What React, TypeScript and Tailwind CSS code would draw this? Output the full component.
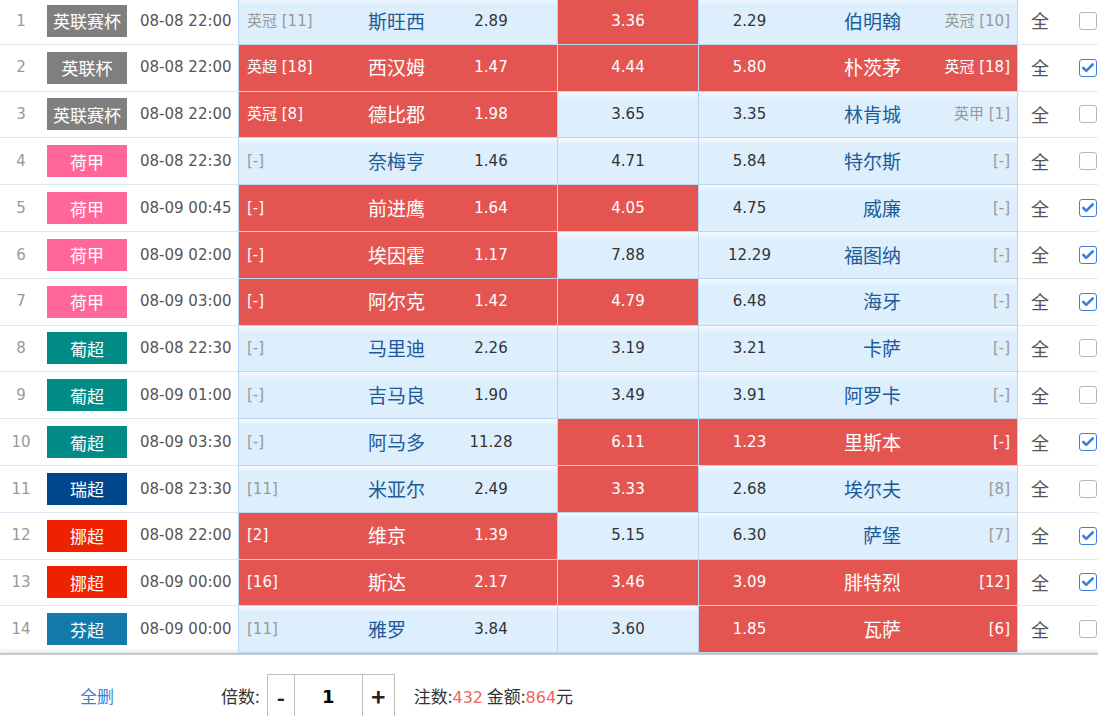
import { Check } from 'lucide-react';

type Match = {
  no: number;
  league: string;
  color: string;
  time: string;
  homeRank: string;
  home: string;
  win: string;
  draw: string;
  lose: string;
  away: string;
  awayRank: string;
  pick: [boolean, boolean, boolean];
  checked: boolean;
};

const GRAY = 'bg-[#7f7f7f]';
const PINK = 'bg-[#ff6699]';
const TEAL = 'bg-[#008b86]';
const NAVY = 'bg-[#00468a]';
const RED = 'bg-[#ee2200]';
const BLUE = 'bg-[#1479ab]';

const matches: Match[] = [
  { no: 1, league: '英联赛杯', color: GRAY, time: '08-08 22:00', homeRank: '英冠 [11]', home: '斯旺西', win: '2.89', draw: '3.36', lose: '2.29', away: '伯明翰', awayRank: '英冠 [10]', pick: [false, true, false], checked: false },
  { no: 2, league: '英联杯', color: GRAY, time: '08-08 22:00', homeRank: '英超 [18]', home: '西汉姆', win: '1.47', draw: '4.44', lose: '5.80', away: '朴茨茅', awayRank: '英冠 [18]', pick: [true, true, true], checked: true },
  { no: 3, league: '英联赛杯', color: GRAY, time: '08-08 22:00', homeRank: '英冠 [8]', home: '德比郡', win: '1.98', draw: '3.65', lose: '3.35', away: '林肯城', awayRank: '英甲 [1]', pick: [true, false, false], checked: false },
  { no: 4, league: '荷甲', color: PINK, time: '08-08 22:30', homeRank: '[-]', home: '奈梅亨', win: '1.46', draw: '4.71', lose: '5.84', away: '特尔斯', awayRank: '[-]', pick: [false, false, false], checked: false },
  { no: 5, league: '荷甲', color: PINK, time: '08-09 00:45', homeRank: '[-]', home: '前进鹰', win: '1.64', draw: '4.05', lose: '4.75', away: '威廉', awayRank: '[-]', pick: [true, true, false], checked: true },
  { no: 6, league: '荷甲', color: PINK, time: '08-09 02:00', homeRank: '[-]', home: '埃因霍', win: '1.17', draw: '7.88', lose: '12.29', away: '福图纳', awayRank: '[-]', pick: [true, false, false], checked: true },
  { no: 7, league: '荷甲', color: PINK, time: '08-09 03:00', homeRank: '[-]', home: '阿尔克', win: '1.42', draw: '4.79', lose: '6.48', away: '海牙', awayRank: '[-]', pick: [true, true, false], checked: true },
  { no: 8, league: '葡超', color: TEAL, time: '08-08 22:30', homeRank: '[-]', home: '马里迪', win: '2.26', draw: '3.19', lose: '3.21', away: '卡萨', awayRank: '[-]', pick: [false, false, false], checked: false },
  { no: 9, league: '葡超', color: TEAL, time: '08-09 01:00', homeRank: '[-]', home: '吉马良', win: '1.90', draw: '3.49', lose: '3.91', away: '阿罗卡', awayRank: '[-]', pick: [false, false, false], checked: false },
  { no: 10, league: '葡超', color: TEAL, time: '08-09 03:30', homeRank: '[-]', home: '阿马多', win: '11.28', draw: '6.11', lose: '1.23', away: '里斯本', awayRank: '[-]', pick: [false, true, true], checked: true },
  { no: 11, league: '瑞超', color: NAVY, time: '08-08 23:30', homeRank: '[11]', home: '米亚尔', win: '2.49', draw: '3.33', lose: '2.68', away: '埃尔夫', awayRank: '[8]', pick: [false, true, false], checked: false },
  { no: 12, league: '挪超', color: RED, time: '08-08 22:00', homeRank: '[2]', home: '维京', win: '1.39', draw: '5.15', lose: '6.30', away: '萨堡', awayRank: '[7]', pick: [true, false, false], checked: true },
  { no: 13, league: '挪超', color: RED, time: '08-09 00:00', homeRank: '[16]', home: '斯达', win: '2.17', draw: '3.46', lose: '3.09', away: '腓特烈', awayRank: '[12]', pick: [true, true, true], checked: true },
  { no: 14, league: '芬超', color: BLUE, time: '08-09 00:00', homeRank: '[11]', home: '雅罗', win: '3.84', draw: '3.60', lose: '1.85', away: '瓦萨', awayRank: '[6]', pick: [false, false, true], checked: false },
];

const numFont = "font-['DejaVu_Sans','Noto_Sans_CJK_SC',sans-serif]";
const cjkFont = "font-['Noto_Sans_CJK_SC',sans-serif]";

const cellOn = 'bg-[#e45552] text-white';
const cellOff = 'bg-[linear-gradient(#f5faff,#ddeefc_7px)]';

function Row({ m }: { m: Match }) {
  const [h, d, a] = m.pick;
  return (
    <div className="flex h-[46.8px] items-stretch">
      <div className={`w-[42px] flex items-center justify-center border-b border-[#dde9f6] text-[15px] text-[#999] ${numFont}`}>
        {m.no}
      </div>
      <div className="w-[92px] flex items-center pl-[5px] border-b border-[#dde9f6]">
        <span className={`${m.color} w-[80px] h-[32px] flex items-center justify-center text-white text-[17px] leading-none ${cjkFont}`}>
          {m.league}
        </span>
      </div>
      <div className={`w-[104px] flex items-center pl-[6px] border-b border-[#dde9f6] text-[15px] text-[#555] ${numFont}`}>
        {m.time}
      </div>

      {/* home block */}
      <div className={`w-[320px] flex items-center border-x border-b border-[#bcd6f2] ${h ? cellOn : cellOff}`}>
        <div className={`w-[129px] pl-[8px] text-[15px] ${h ? 'text-white' : 'text-[#999]'} ${numFont}`}>{m.homeRank}</div>
        <div className={`w-[98px] text-[19px] ${h ? 'text-white' : 'text-[#1c5a98]'} ${cjkFont}`}>{m.home}</div>
        <div className={`w-[50px] text-center text-[15px] ${h ? 'text-white' : 'text-[#333]'} ${numFont}`}>{m.win}</div>
      </div>

      {/* draw */}
      <div className={`w-[140px] flex items-center justify-center border-b border-[#bcd6f2] text-[15px] ${numFont} ${d ? cellOn : `${cellOff} text-[#333]`}`}>
        {m.draw}
      </div>

      {/* away block */}
      <div className={`w-[320px] flex items-center border-x border-b border-[#bcd6f2] ${a ? cellOn : cellOff}`}>
        <div className={`w-[101px] text-center text-[15px] ${a ? 'text-white' : 'text-[#333]'} ${numFont}`}>{m.lose}</div>
        <div className={`w-[101px] text-right text-[19px] ${a ? 'text-white' : 'text-[#1c5a98]'} ${cjkFont}`}>{m.away}</div>
        <div className={`flex-1 text-right pr-[7px] text-[15px] ${a ? 'text-white' : 'text-[#999]'} ${numFont}`}>{m.awayRank}</div>
      </div>

      <div className={`w-[44px] flex items-center justify-center border-b border-[#dde9f6] text-[18px] text-[#555] ${cjkFont}`}>
        全
      </div>
      <div className="flex-1 flex items-center pl-[17px] border-b border-[#dde9f6]">
        {m.checked ? (
          <span className="w-[18px] h-[18px] rounded-[3px] border-[1.5px] border-[#3d80e0] bg-white flex items-center justify-center">
            <Check className="w-[14px] h-[14px] text-[#3d80e0]" strokeWidth={4.5} />
          </span>
        ) : (
          <span className="w-[18px] h-[18px] rounded-[3px] border border-[#b5b5b5] bg-white" />
        )}
      </div>
    </div>
  );
}

export default function App() {
  return (
    <div className="w-[1098px] h-[716px] overflow-hidden bg-white">
      <div className="-mt-[2px]">
        {matches.map((m) => (
          <Row key={m.no} m={m} />
        ))}
      </div>

      {/* footer */}
      <div className="border-t-2 border-[#c9c9c9] shadow-[0_-3px_4px_rgba(0,0,0,0.06)] pt-[19px]">
        <div className={`flex items-center h-[44px] ${cjkFont}`}>
          <span className="ml-[80px] text-[17px] text-[#3b7fd9]">全删</span>
          <span className="ml-[107px] text-[17px] text-[#333]">倍数:</span>
          <div className="ml-[7px] flex h-[44px] border border-[#bdbdbd]">
            <div className="w-[27px] flex items-center justify-center border-r border-[#bdbdbd] text-[22px] font-bold text-[#222]">-</div>
            <div className={`w-[68px] flex items-center justify-center border-r border-[#bdbdbd] text-[18px] font-bold text-black ${numFont}`}>1</div>
            <div className="w-[31px] flex items-center justify-center text-[24px] font-bold text-[#222]">+</div>
          </div>
          <span className="ml-[19px] text-[17px] text-[#333]">
            注数:<span className={`text-[#f26461] ${numFont} text-[16px]`}>432</span> 金额:<span className={`text-[#f26461] ${numFont} text-[16px]`}>864</span>元
          </span>
        </div>
      </div>
    </div>
  );
}
